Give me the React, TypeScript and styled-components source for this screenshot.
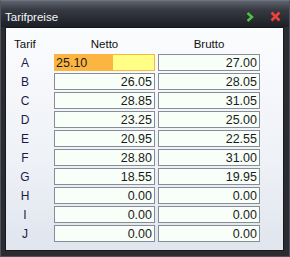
import styled, { createGlobalStyle } from "styled-components";

const Global = createGlobalStyle`
  html, body {
    margin: 0;
    padding: 0;
    background: #2c2e33;
  }
`;

const rows = [
  { id: "A", netto: "25.10", brutto: "27.00" },
  { id: "B", netto: "26.05", brutto: "28.05" },
  { id: "C", netto: "28.85", brutto: "31.05" },
  { id: "D", netto: "23.25", brutto: "25.00" },
  { id: "E", netto: "20.95", brutto: "22.55" },
  { id: "F", netto: "28.80", brutto: "31.00" },
  { id: "G", netto: "18.55", brutto: "19.95" },
  { id: "H", netto: "0.00", brutto: "0.00" },
  { id: "I", netto: "0.00", brutto: "0.00" },
  { id: "J", netto: "0.00", brutto: "0.00" },
];

const Window = styled.div`
  width: 290px;
  height: 257px;
  box-sizing: border-box;
  display: flex;
  flex-direction: column;
  background: #2a2c31;
  border: 1px solid #50535b;
  border-top-color: #70747e;
  font-family: "Liberation Sans", Arial, sans-serif;
`;

const TitleBar = styled.div`
  height: 26px;
  box-sizing: border-box;
  display: flex;
  align-items: center;
  padding: 5px 8px 0 4px;
  background: linear-gradient(#5d626d 0%, #363942 35%, #1d1f25 100%);
  color: #f4f6fa;
  font-size: 11.5px;
`;

const Title = styled.span`
  flex: 1;
`;

const TitleIcon = styled.svg<{ $gap: number }>`
  display: block;
  margin-left: ${(p) => p.$gap}px;
`;

const Content = styled.div`
  flex: 1;
  margin: 0 5px 5px 4px;
  border: 1px solid #16181c;
  background: linear-gradient(#fbfcfe 0%, #eef1f6 60%, #e0e5ee 100%);
  display: grid;
  grid-template-columns: 45px 101px 102px;
  grid-auto-rows: 17px;
  grid-template-rows: 16px;
  column-gap: 3px;
  row-gap: 2px;
  padding-top: 8px;
  align-content: start;
`;

const Header = styled.div<{ $left?: boolean }>`
  font-size: 11.5px;
  color: #111;
  display: flex;
  align-items: center;
  justify-content: ${(p) => (p.$left ? "flex-start" : "center")};
  padding-left: ${(p) => (p.$left ? "8px" : "0")};
`;

const Letter = styled.div`
  font-size: 12px;
  color: #1c1a48;
  display: flex;
  align-items: center;
  justify-content: center;
  padding-right: 7px;
`;

const Field = styled.div<{ $active?: boolean }>`
  box-sizing: border-box;
  border: 1px solid ${(p) => (p.$active ? "#fbb540" : "#878c96")};
  background: ${(p) =>
    p.$active
      ? "linear-gradient(90deg, #fbb540 0, #fbb540 58px, #ffff86 58px)"
      : "#f8fff8"};
  font-size: 12.5px;
  color: #1b1b1b;
  display: flex;
  align-items: center;
  justify-content: ${(p) => (p.$active ? "flex-start" : "flex-end")};
  padding: 0 2px 0 1px;
`;

export default function App() {
  return (
    <>
      <Global />
      <Window>
        <TitleBar>
          <Title>Tarifpreise</Title>
          <TitleIcon $gap={0} width="8" height="10" viewBox="0 0 8 10">
            <path d="M1.5 1 L6 5 L1.5 9" fill="none" stroke="#4fc43a" strokeWidth="2.4" />
          </TitleIcon>
          <TitleIcon $gap={16} width="11" height="11" viewBox="0 0 11 11">
            <path d="M1.5 1.5 L9.5 9.5 M9.5 1.5 L1.5 9.5" stroke="#f0403c" strokeWidth="2.6" />
          </TitleIcon>
        </TitleBar>
        <Content>
          <Header $left>Tarif</Header>
          <Header>Netto</Header>
          <Header>Brutto</Header>
          {rows.map((r, i) => (
            <Row key={r.id} id={r.id} netto={r.netto} brutto={r.brutto} active={i === 0} />
          ))}
        </Content>
      </Window>
    </>
  );
}

function Row(props: { id: string; netto: string; brutto: string; active: boolean }) {
  return (
    <>
      <Letter>{props.id}</Letter>
      <Field $active={props.active}>{props.netto}</Field>
      <Field>{props.brutto}</Field>
    </>
  );
}
